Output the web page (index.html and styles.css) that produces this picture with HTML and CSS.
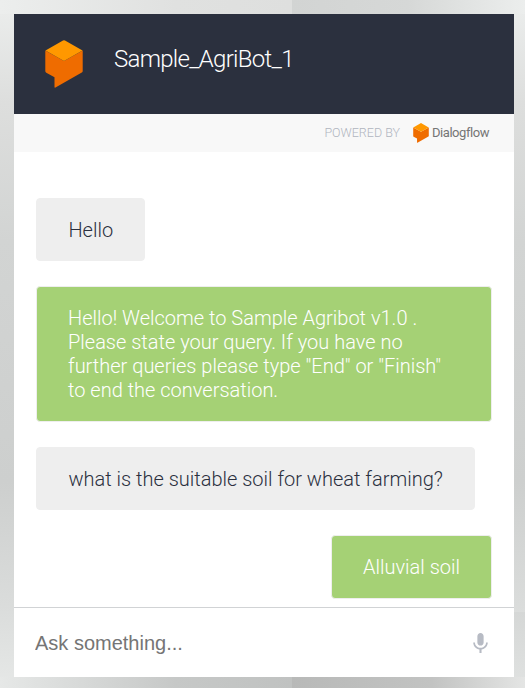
FILE: index.html
```html
<!DOCTYPE html>
<html lang="en">
<head>
<meta charset="utf-8">
<title>Sample_AgriBot_1</title>
<link rel="stylesheet" href="styles.css">
</head>
<body>
<main class="chat">
  <header class="header">
    <svg class="logo" viewBox="0 0 38 48" aria-hidden="true">
      <path fill="#ef6c00" d="M.3 10.500 19 21 37.700 10.500V31Q37.700 32 36.800 32.500L10.500 47.500Q9.500 48 9.500 47V37.300L1.300 32.700Q.3 32 .3 31Z"/>
      <path fill="#ff9800" d="M.5 10.500 18 .5Q19 0 20 .5L37.500 10.500 19 21Z"/>
    </svg>
    <h1 class="title">Sample_AgriBot_1</h1>
  </header>
  <div class="powered">
    <span class="powered-label">Powered by</span>
    <svg class="powered-logo" viewBox="0 0 38 48" aria-hidden="true">
      <path fill="#ef6c00" d="M.3 10.500 19 21 37.700 10.500V31Q37.700 32 36.800 32.500L10.500 47.500Q9.500 48 9.500 47V37.300L1.300 32.700Q.3 32 .3 31Z"/>
      <path fill="#ff9800" d="M.5 10.500 18 .5Q19 0 20 .5L37.500 10.500 19 21Z"/>
    </svg>
    <span class="brand">Dialogflow</span>
  </div>
  <section class="messages">
    <p class="bubble user">Hello</p>
    <p class="bubble bot">Hello! Welcome to Sample Agribot v1.0 . Please state your query. If you have no further queries please type "End" or "Finish" to end the conversation.</p>
    <p class="bubble user">what is the suitable soil for wheat farming?</p>
    <p class="bubble bot">Alluvial soil</p>
  </section>
  <form class="ask">
    <input class="ask-input" type="text" placeholder="Ask something...">
    <svg class="mic" viewBox="0 0 24 24" aria-hidden="true">
      <path fill="#b7bbc4" d="M12 14c1.660 0 2.990-1.340 2.990-3L15 5c0-1.660-1.340-3-3-3S9 3.340 9 5v6c0 1.660 1.340 3 3 3zm5.300-3c0 3-2.540 5.100-5.300 5.100S6.700 14 6.700 11H5c0 3.410 2.720 6.230 6 6.720V21h2v-3.280c3.280-.48 6-3.300 6-6.720h-1.700z"/>
    </svg>
  </form>
</main>
</body>
</html>
```
FILE: styles.css
```css
* { box-sizing: border-box; }

body {
  margin: 0;
  height: 688px;
  padding: 14px 11px 11px 14px;
  overflow: hidden;
  font-family: Roboto, sans-serif;
  font-weight: 300;
  background:
    linear-gradient(90deg, #b8b9b8, #c2c3c2 60%, #e4e5e4) 292px 677px / 233px 11px no-repeat,
    linear-gradient(90deg, #e6e8e7, #c6c8c7 60%, #c0c2c1) 0 677px / 292px 11px no-repeat,
    linear-gradient(90deg, #d2d4d3, #d6d8d7 50%, #eceeed) 292px 0 / 233px 14px no-repeat,
    linear-gradient(90deg, #eceeed, #e0e1e0 60%, #dedfde) 0 0 / 292px 14px no-repeat,
    linear-gradient(#d5d7d6, #e0e2e1) 514px 612px / 11px 76px no-repeat,
    linear-gradient(#eceeed, #dddedd 15%, #d2d4d3 35%, #cdcfce 70%, #dadcdb 88%, #e6e8e7);
}

.chat {
  height: 663px;
  display: flex;
  flex-direction: column;
  background: #fff;
}

.header {
  height: 100px;
  padding: 0 0 1px 31px;
  display: flex;
  align-items: center;
  gap: 31px;
  background: #2b303e;
}

.logo { width: 38px; height: 48px; }

.title {
  margin: 0 0 10px;
  font-size: 24px;
  line-height: 28px;
  font-weight: 300;
  letter-spacing: -0.72px;
  color: #fff;
}

.powered {
  height: 38px;
  padding-right: 25px;
  display: flex;
  align-items: center;
  justify-content: flex-end;
  background: #f8f8f8;
}

.powered-label {
  margin: 0 13px 2px 0;
  font-size: 12.500px;
  text-transform: uppercase;
  color: #b0b5bf;
}

.powered-logo { width: 16px; height: 20px; margin-right: 3px; }

.brand {
  margin-bottom: 2px;
  font-size: 13px;
  font-weight: 400;
  letter-spacing: -0.45px;
  color: #757575;
}

.messages {
  flex: 1;
  padding: 46px 22px 0;
  display: flex;
  flex-direction: column;
  align-items: flex-start;
  gap: 25px;
}

.bubble {
  margin: 0;
  padding: 18.500px 31.400px;
  border: 1px solid #eee;
  border-radius: 4px;
  font-size: 20px;
  line-height: 24px;
}

.user { background: #eee; color: #2b303e; }

.bot {
  align-self: flex-end;
  padding: 18.500px 31px 19.500px;
  background: #a5d175;
  color: #fff;
}

.ask {
  height: 70px;
  padding: 2px 21px 0;
  display: flex;
  align-items: center;
  border-top: 1px solid #d1d3d5;
}

.ask-input {
  flex: 1;
  min-width: 0;
  padding: 0;
  border: 0;
  outline: 0;
  background: none;
  font: 20px "Liberation Sans", Arial, sans-serif;
}

.ask-input::placeholder { color: #757575; }

.mic { width: 25px; height: 25px; }
```
